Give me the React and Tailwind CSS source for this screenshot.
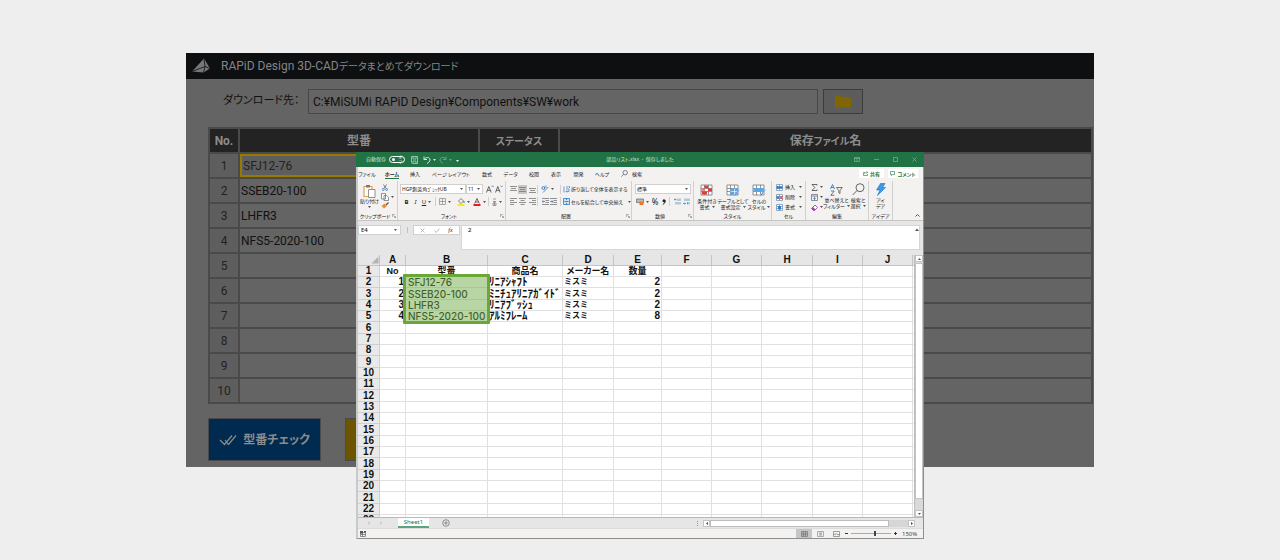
import React from "react";

const latinJp = "font-['Noto_Sans','Noto_Sans_CJK_JP',sans-serif]";

/* ---------- small drawing helpers ---------- */

function Svg({ w, h, className = "", children }) {
  return (
    <svg width={w} height={h} viewBox={`0 0 ${w} ${h}`} fill="none" className={`shrink-0 ${className}`} aria-hidden="true">
      {children}
    </svg>
  );
}

function Caret({ className = "text-[#555]" }) {
  return (
    <Svg w={3} h={2} className={className}>
      <path d="M0 0H3L1.5 2Z" fill="currentColor" />
    </Svg>
  );
}

function Lines({ rows }) {
  return (
    <Svg w={7} h={7}>
      {rows.map(([x, y, w]) => (
        <path key={y} d={`M${x} ${y}h${w}`} stroke="#777" strokeWidth="0.8" />
      ))}
    </Svg>
  );
}

function IconButton({ label, className = "", children }) {
  return (
    <button type="button" aria-label={label} className={`flex h-[9px] shrink-0 items-center justify-center gap-[2px] ${className}`}>
      {children}
    </button>
  );
}

/* ---------- download window ---------- */

const parts = ["SFJ12-76", "SSEB20-100", "LHFR3", "NFS5-2020-100", "", "", "", "", "", ""];

function DownloadWindow() {
  const th = "border-2 border-[#4a4a4a] bg-[#232323] p-0 text-[12px] font-bold text-[#8c8c8c]";
  const td = "h-[25px] border-2 border-[#4a4a4a] p-0 text-[12px] leading-[18px]";
  return (
    <section className="overflow-hidden bg-[#646464] font-['Roboto','Noto_Sans_CJK_JP',sans-serif] text-[#111]">
      <header className="flex h-[26px] items-center gap-2 bg-[#0d0f11] pl-[5px] text-[#858585]">
        <Svg w={22} h={18}>
          <path d="M1 14.500L13 1.500L19 11.500L12.500 15.500Z" fill="#777" />
          <path d="M1 14.500L14 9.500L19 11.500M13 1.500L14 9.500L12.500 15.500" stroke="#1a1a1a" strokeWidth="0.9" />
        </Svg>
        <h1 className="text-[12px] leading-[18px] whitespace-nowrap">
          RAPiD Design 3D-CAD<span className="text-[10px] [font-feature-settings:'palt']">データまとめてダウンロード</span>
        </h1>
      </header>

      <div className="flex items-center pt-[10px] pl-[37px]">
        <label htmlFor="dest" className="w-[85px] text-[11px] whitespace-nowrap [font-feature-settings:'palt']">
          ダウンロード先：
        </label>
        <input
          id="dest"
          readOnly
          value="C:¥MiSUMi RAPiD Design¥Components¥SW¥work"
          className="h-[25px] w-[510px] border border-[#484848] bg-[#656565] px-[4px] text-[12px] outline-none"
        />
        <button type="button" aria-label="フォルダー" className="ml-[5px] flex h-[25px] w-[40px] items-center justify-center border border-[#3c3c3c] bg-[#5c5c5c]">
          <Svg w={16} h={13}>
            <path d="M1.500 0.500H6L7.500 2H14.500Q16 2 16 3.500V11Q16 12.500 14.500 12.500H1.500Q0 12.500 0 11V2Q0 0.500 1.500 0.500Z" fill="#806600" />
          </Svg>
        </button>
      </div>

      <div className="mt-[13px] pr-px pl-[22px]">
        <table className="w-full table-fixed border-collapse">
          <colgroup>
            <col className="w-[30px]" />
            <col className="w-[240px]" />
            <col className="w-[80px]" />
            <col />
          </colgroup>
          <thead>
            <tr className="h-[25px]">
              <th className={th}>No.</th>
              <th className={th}>型番</th>
              <th className={th}>
                <span className="text-[10px] [font-feature-settings:'palt']">ステータス</span>
              </th>
              <th className={th}>
                保存<span className="text-[10px] [font-feature-settings:'palt']">ファイル</span>名
              </th>
            </tr>
          </thead>
          <tbody>
            {parts.map((p, i) => (
              <tr key={i}>
                <td className={`${td} bg-[#5e5e5e] text-center text-[#222]`}>{i + 1}</td>
                <td className={td}>
                  <div className={i === 0 ? "flex h-[23px] items-center border-2 border-[#997a00] bg-[#5e5e5e] pl-[1px] text-[#222]" : "pl-px"}>{p}</div>
                </td>
                <td className={td} />
                <td className={td} />
              </tr>
            ))}
          </tbody>
        </table>
      </div>

      <div className="flex gap-[24px] pt-[14px] pb-[6px] pl-[22px]">
        <button type="button" className="flex h-[43px] w-[113px] items-center justify-center gap-[6px] border border-[#4a4a4a] bg-[#002a50] text-[12px] font-bold whitespace-nowrap text-[#8c8c8c] [font-feature-settings:'palt']">
          <Svg w={18} h={12}>
            <path d="M1 6L5.500 10.500L13 1.500M6 6L9.500 10.500L17 1.500" stroke="#8c8c8c" strokeWidth="1.200" />
          </Svg>
          型番チェック
        </button>
        <button type="button" aria-label="ダウンロード" className="h-[43px] w-[113px] border border-[#4a4a4a] bg-[#6b5500]" />
      </div>
    </section>
  );
}

/* ---------- spreadsheet: title bar and tabs ---------- */

function TitleBar() {
  return (
    <header className="grid h-[15px] grid-cols-[1fr_auto_1fr] items-center bg-[#217346] text-[5px] text-[#d5e6dc]">
      <div className="flex items-center pl-[10px]">
        <span>自動保存</span>
        <button type="button" role="switch" aria-checked="false" className="ml-[3px] flex h-[7px] w-[16px] items-center gap-[2px] rounded-full border border-white pl-[2px] text-[4px] leading-[5px] text-white [font-feature-settings:'palt']">
          <span className="size-[3px] shrink-0 rounded-full bg-white" />
          オフ
        </button>
        <IconButton label="保存" className="ml-[6px]">
          <Svg w={7} h={8}>
            <path d="M0.500 0.500H6.500V7.500H1.500L0.500 6.500ZM2 0.500V3H5V0.500M2 7.500V5H5V7.500" stroke="#b5d3c2" strokeWidth="0.8" />
          </Svg>
        </IconButton>
        <IconButton label="元に戻す" className="ml-[5px]">
          <Svg w={8} h={8}>
            <path d="M1 0.500V3.500H4M1 3.500C3 0.500 7 1 7 4C7 5.500 5.500 6.500 4 7.500" stroke="#d5e6dc" />
          </Svg>
          <Caret className="text-[#d5e6dc]" />
        </IconButton>
        <IconButton label="やり直し" className="ml-[3px] opacity-40">
          <Svg w={8} h={8}>
            <path d="M7 0.500V3.500H4M7 3.500C5 0.500 1 1 1 4C1 5.500 2.500 6.500 4 7.500" stroke="#d5e6dc" />
          </Svg>
          <Caret className="text-[#d5e6dc]" />
        </IconButton>
        <IconButton label="カスタマイズ" className="ml-[4px]">
          <Svg w={3} h={4}>
            <path d="M0 0.500H3M0 2H3L1.500 4Z" stroke="none" fill="white" />
          </Svg>
        </IconButton>
      </div>
      <span className="whitespace-pre [font-feature-settings:'palt']">部品リスト.xlsx  -  保存しました</span>
      <div className="flex items-center justify-end gap-[14px] pr-[7px] text-[#7fb195]">
        <IconButton label="リボンの表示">
          <Svg w={6} h={5}>
            <path d="M0.500 0.500H5.500V4.500H0.500ZM0.500 1.500H5.500M3 2V4" stroke="currentColor" strokeWidth="0.7" />
          </Svg>
        </IconButton>
        <IconButton label="最小化">
          <Svg w={5} h={5}>
            <path d="M0 2.500H5" stroke="currentColor" strokeWidth="0.7" />
          </Svg>
        </IconButton>
        <IconButton label="最大化">
          <Svg w={5} h={5}>
            <path d="M0.500 0.500H4.500V4.500H0.500Z" stroke="currentColor" strokeWidth="0.7" />
          </Svg>
        </IconButton>
        <IconButton label="閉じる">
          <Svg w={5} h={5}>
            <path d="M0.500 0.500L4.500 4.500M4.500 0.500L0.500 4.500" stroke="currentColor" strokeWidth="0.7" />
          </Svg>
        </IconButton>
      </div>
    </header>
  );
}

const tabs = [
  ["ファイル", "w-[18px]"],
  ["ホーム", "w-[32px]"],
  ["挿入", "w-[14px]"],
  ["ページ レイアウト", "w-[58px]"],
  ["数式", "w-[14px]"],
  ["データ", "w-[33px]"],
  ["校閲", "w-[14px]"],
  ["表示", "w-[30px]"],
  ["開発", "w-[15px]"],
  ["ヘルプ", "w-[32px]"],
];

function RibbonTabs() {
  return (
    <nav className="flex h-[13px] items-center text-[5px] leading-[8px] text-[#222]">
      {tabs.map(([name, width]) => (
        <button key={name} type="button" className={`flex h-[12px] shrink-0 items-center justify-center whitespace-nowrap [font-feature-settings:'palt'] ${width}`}>
          <span className={name === "ホーム" ? "border-b border-[#217346] pt-px font-bold" : ""}>{name}</span>
        </button>
      ))}
      <button type="button" className="ml-[3px] flex items-center gap-[4px] whitespace-nowrap">
        <Svg w={7} h={7}>
          <circle cx="4.200" cy="2.700" r="2.200" stroke="#555" strokeWidth="0.7" />
          <path d="M2.600 4.300L0.300 6.700" stroke="#555" strokeWidth="0.7" />
        </Svg>
        検索
      </button>
      <div className="ml-auto flex gap-[4px] pr-[5px] font-bold text-[#217346]">
        <button type="button" className="flex h-[9px] w-[25px] items-center justify-center gap-[2px] bg-white">
          <Svg w={5} h={5}>
            <path d="M2 1.500H0.500V4.500H4.500V3M1.500 3C2 1.500 3 1.300 4.500 1.300M3.500 0.300L4.700 1.300L3.500 2.300" stroke="#217346" strokeWidth="0.6" />
          </Svg>
          共有
        </button>
        <button type="button" className="flex h-[9px] w-[30px] items-center justify-center gap-[2px] bg-white whitespace-nowrap [font-feature-settings:'palt']">
          <Svg w={5} h={5}>
            <path d="M0.500 0.500H4.500V3.500H2.500L1.500 4.700V3.500H0.500Z" stroke="#217346" strokeWidth="0.6" />
          </Svg>
          コメント
        </button>
      </div>
    </nav>
  );
}

/* ---------- spreadsheet: ribbon ---------- */

function Group({ name, width, launcher, children }) {
  return (
    <div className={`flex shrink-0 flex-col border-r border-[#d2d0ce] ${width}`}>
      <div className="h-[31px]">{children}</div>
      <div className="flex h-[8px] items-center">
        <span className="flex-1 text-center leading-[8px] whitespace-nowrap [font-feature-settings:'palt']">{name}</span>
        {launcher && (
          <button type="button" aria-label={`${name}の設定`} className="pr-px">
            <Svg w={4} h={4}>
              <path d="M0.300 3V0.300H3M1.500 1.500L3.500 3.500M3.700 2V3.700H2" stroke="#777" strokeWidth="0.6" />
            </Svg>
          </button>
        )}
      </div>
    </div>
  );
}

function Picker({ label, value, width }) {
  return (
    <span className={`flex h-[10px] shrink-0 items-center border border-[#d2d0ce] bg-white pr-[2px] ${width}`}>
      <select aria-label={label} defaultValue={value} className="h-[8px] min-w-0 flex-1 appearance-none pl-px text-[5px] leading-[8px] outline-none [font-feature-settings:'palt']">
        <option>{value}</option>
      </select>
      <Caret />
    </span>
  );
}

function BigButton({ icon, lines, caret, width }) {
  return (
    <button type="button" className={`flex shrink-0 flex-col items-center leading-[6px] whitespace-nowrap [font-feature-settings:'palt'] ${width}`}>
      <span className="flex h-[15px] items-center">{icon}</span>
      <span>{lines[0]}</span>
      <span className="flex h-[6px] items-center gap-[2px]">
        {lines[1]}
        {caret && <Caret />}
      </span>
    </button>
  );
}

function GridArt({ children }) {
  return (
    <Svg w={14} h={13}>
      <path d="M1 1H12V11H1ZM1 4.500H12M1 7.500H12M4.500 1V11M8.500 1V11" fill="#fff" stroke="#777" strokeWidth="0.8" />
      {children}
    </Svg>
  );
}

function CellIcon({ children }) {
  return (
    <Svg w={7} h={7}>
      <path d="M0.500 0.500H6.500V6.500H0.500ZM0.500 2.500H6.500M0.500 4.500H6.500M3.500 0.500V6.500" fill="#fff" stroke="#6d8aa5" strokeWidth="0.7" />
      {children}
    </Svg>
  );
}

function LetterA({ up }) {
  return (
    <Svg w={8} h={8}>
      <path d="M0.500 7.500L2.800 1.500L5.200 7.500M1.400 5.400H4.400" stroke="#444" strokeWidth="0.8" />
      <path d={up ? "M5.500 2L6.600 0.700L7.700 2" : "M5.500 0.700L6.600 2L7.700 0.700"} stroke="#2b7cd3" strokeWidth="0.7" />
    </Svg>
  );
}

function Indent({ flip }) {
  return (
    <Svg w={7} h={7}>
      <path d="M0 0.500H7M3.500 2.500H7M3.500 4.500H7M0 6.500H7" stroke="#666" strokeWidth="0.7" />
      <path d={flip ? "M0 3.500H3M1.800 2.300L3 3.500L1.800 4.700" : "M3 3.500H0M1.200 2.300L0 3.500L1.200 4.700"} stroke="#2b7cd3" strokeWidth="0.8" />
    </Svg>
  );
}

function Divider() {
  return <span className="h-[9px] w-px shrink-0 bg-[#d2d0ce]" />;
}

function Ribbon() {
  const row = "flex h-[13px] items-center";
  return (
    <div className="flex h-[41px] border-b border-[#c8c6c4] pt-px text-[5px] leading-[6px] text-[#222]">
      <Group name="クリップボード" width="w-[40px]" launcher>
        <div className="flex pt-[2px]">
          <BigButton
            width="w-[23px]"
            lines={["貼り付け", ""]}
            caret
            icon={
              <Svg w={13} h={14}>
                <path d="M1 2.500H9V12.500H1Z" fill="#fff" stroke="#e8a04d" strokeWidth="1.200" />
                <path d="M3 1H7V3.500H3Z" fill="#777" />
                <path d="M5.500 5.500H12V13.500H5.500Z" fill="#fff" stroke="#777" strokeWidth="0.8" />
              </Svg>
            }
          />
          <div className="flex flex-col">
            <IconButton label="切り取り" className="w-[8px]">
              <Svg w={6} h={7}>
                <path d="M1.500 0.500L4 4.500M4.500 0.500L2 4.500" stroke="#555" strokeWidth="0.7" />
                <circle cx="1.300" cy="5.500" r="1" stroke="#2b7cd3" strokeWidth="0.8" />
                <circle cx="4.700" cy="5.500" r="1" stroke="#2b7cd3" strokeWidth="0.8" />
              </Svg>
            </IconButton>
            <IconButton label="コピー">
              <Svg w={8} h={8}>
                <path d="M0.500 0.500H4.500V6H0.500ZM3 2.500H5.500L7.500 4.500V7.500H3Z" fill="#fff" stroke="#666" strokeWidth="0.7" />
              </Svg>
              <Caret />
            </IconButton>
            <IconButton label="書式のコピー" className="w-[8px]">
              <Svg w={8} h={7}>
                <path d="M7.500 0.500L5 3" stroke="#555" strokeWidth="1.200" />
                <path d="M3.500 1.500L6 4L3 6.500L0.500 4Z" fill="#e8912d" />
              </Svg>
            </IconButton>
          </div>
        </div>
      </Group>

      <Group name="フォント" width="w-[108px]" launcher>
        <div className={`${row} pt-[3px] pl-[2px]`}>
          <Picker label="フォント名" value="HGP創英角ｺﾞｼｯｸUB" width="w-[66px]" />
          <Picker label="サイズ" value="11" width="w-[17px]" />
          <IconButton label="拡大" className="ml-[3px]">
            <LetterA up />
          </IconButton>
          <IconButton label="縮小" className="ml-px">
            <LetterA />
          </IconButton>
        </div>
        <div className={`${row} pt-[2px] pl-[4px] text-[6px]`}>
          <button type="button" className="w-[9px] font-bold">B</button>
          <button type="button" className="w-[9px] italic">I</button>
          <button type="button" className="w-[8px] underline">U</button>
          <Caret />
          <span className="w-[4px]" />
          <Divider />
          <IconButton label="罫線" className="ml-[3px]">
            <Svg w={7} h={7}>
              <path d="M0.500 0.500H6.500V6.500H0.500ZM3.500 0.500V6.500M0.500 3.500H6.500" stroke="#888" strokeWidth="0.7" />
            </Svg>
            <Caret />
          </IconButton>
          <IconButton label="塗りつぶしの色" className="ml-[6px]">
            <Svg w={8} h={8}>
              <path d="M1.500 3L4 0.500L6.500 3L4 5.500Z" stroke="#555" strokeWidth="0.7" />
              <path d="M7 3V5" stroke="#2b7cd3" />
              <path d="M0.500 7H7.500" stroke="#ffe600" strokeWidth="1.800" />
            </Svg>
            <Caret />
          </IconButton>
          <IconButton label="フォントの色" className="ml-[3px]">
            <Svg w={8} h={8}>
              <path d="M1.700 5.500L4 0.500L6.300 5.500M2.700 4H5.300" stroke="#444" strokeWidth="0.8" />
              <path d="M0.500 7H7.500" stroke="#e00" strokeWidth="1.800" />
            </Svg>
            <Caret />
          </IconButton>
          <span className="w-[2px]" />
          <Divider />
          <IconButton label="ふりがな" className="ml-[3px]">
            <Svg w={5} h={8}>
              <path d="M1 1H4M1 3.500H4M1 5H4V7.500H1ZM2.500 3.500V7.500" stroke="#777" strokeWidth="0.7" />
            </Svg>
            <Caret />
          </IconButton>
        </div>
      </Group>

      <Group name="配置" width="w-[126px]" launcher>
        <div className={`${row} pt-[3px] pl-[3px]`}>
          <IconButton label="上揃え" className="w-[9px]">
            <Lines rows={[[0, 0.5, 7], [1, 2.5, 5], [0, 4.5, 7]]} />
          </IconButton>
          <IconButton label="上下中央揃え" className="w-[9px] bg-[#c8c6c4]">
            <Lines rows={[[0, 1.5, 7], [1, 3.5, 5], [0, 5.5, 7]]} />
          </IconButton>
          <IconButton label="下揃え" className="w-[10px]">
            <Lines rows={[[0, 2.5, 7], [1, 4.5, 5], [0, 6.5, 7]]} />
          </IconButton>
          <Divider />
          <IconButton label="方向" className="ml-[3px]">
            <Svg w={8} h={8}>
              <path d="M2 7.500L7.500 2" stroke="#666" strokeWidth="0.8" />
              <circle cx="2.200" cy="3" r="1.400" stroke="#2b7cd3" strokeWidth="0.8" />
              <path d="M3.600 1.500V4.500M5 0.500V3" stroke="#2b7cd3" strokeWidth="0.8" />
            </Svg>
            <Caret />
          </IconButton>
          <span className="w-[6px]" />
          <Divider />
          <button type="button" className="ml-[2px] flex items-center gap-px whitespace-nowrap [font-feature-settings:'palt']">
            <Svg w={7} h={7}>
              <path d="M1 0.500V6.500M3 1L5 1M3 3H6V5.500H3M4 4.500L3 5.500L4 6.500" stroke="#2b7cd3" strokeWidth="0.7" />
              <path d="M5.500 0.500H6.500V2" stroke="#666" strokeWidth="0.7" />
            </Svg>
            折り返して全体を表示する
          </button>
        </div>
        <div className={`${row} pt-[2px] pl-[3px]`}>
          <IconButton label="左揃え" className="w-[9px]">
            <Lines rows={[[0, 0.5, 7], [0, 2.5, 4], [0, 4.5, 7], [0, 6.5, 4]]} />
          </IconButton>
          <IconButton label="中央揃え" className="w-[9px]">
            <Lines rows={[[0, 0.5, 7], [1.5, 2.5, 4], [0, 4.5, 7], [1.5, 6.5, 4]]} />
          </IconButton>
          <IconButton label="右揃え" className="w-[10px]">
            <Lines rows={[[0, 0.5, 7], [3, 2.5, 4], [0, 4.5, 7], [3, 6.5, 4]]} />
          </IconButton>
          <Divider />
          <IconButton label="インデント解除" className="ml-[3px] w-[8px]">
            <Indent />
          </IconButton>
          <IconButton label="インデント" className="w-[9px]">
            <Indent flip />
          </IconButton>
          <span className="w-[2px]" />
          <Divider />
          <button type="button" className="ml-[2px] flex items-center gap-px whitespace-nowrap [font-feature-settings:'palt']">
            <Svg w={7} h={7}>
              <path d="M0.500 0.500H6.500V6.500H0.500Z" fill="#cfe4f7" stroke="#2b7cd3" strokeWidth="0.8" />
              <path d="M1.500 3.500H5.500M3.500 0.500V2M3.500 5V6.500" stroke="#2b6cb0" strokeWidth="0.8" />
            </Svg>
            セルを結合して中央揃え
            <span className="pl-[4px]">
              <Caret />
            </span>
          </button>
        </div>
      </Group>

      <Group name="数値" width="w-[62px]" launcher>
        <div className={`${row} pt-[3px] pl-[3px]`}>
          <Picker label="表示形式" value="標準" width="w-[56px]" />
        </div>
        <div className={`${row} pt-[2px] pl-[4px] text-[8px]`}>
          <IconButton label="通貨">
            <Svg w={8} h={7}>
              <path d="M0.500 1H7.500V4.500H0.500Z" fill="#bbb" stroke="#666" strokeWidth="0.7" />
              <path d="M3.500 3.500H7.500V7H3.500Z" fill="#e8762d" />
            </Svg>
            <Caret />
          </IconButton>
          <button type="button" className="ml-[2px] w-[8px]">%</button>
          <IconButton label="桁区切り" className="w-[10px]">
            <Svg w={4} h={6}>
              <circle cx="2" cy="1.700" r="1.500" fill="#222" />
              <path d="M3.200 1.700C3.200 3.500 2.200 4.800 0.800 5.500" stroke="#222" />
            </Svg>
          </IconButton>
          <Divider />
          <IconButton label="小数点以下を増やす" className="ml-[3px] w-[9px]">
            <Svg w={7} h={7}>
              <path d="M2.500 1.500H0M1 0.500L0 1.500L1 2.500" stroke="#2b7cd3" strokeWidth="0.7" />
              <path d="M4 0.500V3M6 0.500V3M2 4V6.500M4 4V6.500M6 4V6.500" stroke="#5b8ab5" strokeWidth="0.8" />
            </Svg>
          </IconButton>
          <IconButton label="小数点以下を減らす" className="w-[8px]">
            <Svg w={7} h={7}>
              <path d="M0 5.500H2.500M1.500 4.500L2.500 5.500L1.500 6.500" stroke="#2b7cd3" strokeWidth="0.7" />
              <path d="M2 0.500V3M4 0.500V3M6 0.500V3M4.500 4V6.500M6 4V6.500" stroke="#5b8ab5" strokeWidth="0.8" />
            </Svg>
          </IconButton>
        </div>
      </Group>

      <Group name="スタイル" width="w-[78px]">
        <div className="flex pt-[2px] pl-[2px]">
          <BigButton
            width="w-[22px]"
            lines={["条件付き", "書式"]}
            caret
            icon={
              <GridArt>
                <path d="M4.500 1.500H8V4H4.500ZM8 4.500H12V7H8ZM2 7.500H7V10.500H2Z" fill="#e03c3c" />
                <path d="M1.500 4.500H5V7H1.500Z" fill="#f08080" />
              </GridArt>
            }
          />
          <BigButton
            width="w-[30px]"
            lines={["テーブルとして", "書式設定"]}
            caret
            icon={
              <GridArt>
                <path d="M4.500 4.500H12V11H4.500Z" fill="#5ba7e6" />
                <path d="M4.500 7.500H12M8.500 4.500V11" stroke="#fff" strokeWidth="0.6" />
                <path d="M13 5L9 10L7 12.500L9.500 11.500L13.500 6Z" fill="#2b7cd3" stroke="#fff" strokeWidth="0.4" />
              </GridArt>
            }
          />
          <BigButton
            width="w-[22px]"
            lines={["セルの", "スタイル"]}
            caret
            icon={
              <GridArt>
                <path d="M1.500 4H12V8H1.500Z" fill="#5ba7e6" />
                <path d="M13 5L9 10L6.500 12.500L9.500 11.500L13.500 6Z" fill="#2b7cd3" stroke="#fff" strokeWidth="0.4" />
              </GridArt>
            }
          />
        </div>
      </Group>

      <Group name="セル" width="w-[34px]">
        <div className="flex flex-col pt-px pl-[4px]">
          <button type="button" className="flex h-[10px] items-center gap-[2px] whitespace-nowrap">
            <CellIcon>
              <path d="M2 2.500H6.500V4.500H2ZM2 1.500L0.300 3.500L2 5.500Z" fill="#2b7cd3" />
            </CellIcon>
            挿入
            <span className="pl-[2px]">
              <Caret />
            </span>
          </button>
          <button type="button" className="flex h-[10px] items-center gap-[2px] whitespace-nowrap">
            <CellIcon>
              <path d="M0.500 2.500H3V4.500H0.500Z" fill="#2b7cd3" />
              <path d="M3.500 2L6.700 5M6.700 2L3.500 5" stroke="#e03c3c" />
            </CellIcon>
            削除
            <span className="pl-[2px]">
              <Caret />
            </span>
          </button>
          <button type="button" className="flex h-[10px] items-center gap-[2px] whitespace-nowrap">
            <CellIcon>
              <path d="M2 2H5V5.500H2Z" fill="#2b7cd3" />
            </CellIcon>
            書式
            <span className="pl-[2px]">
              <Caret />
            </span>
          </button>
        </div>
      </Group>

      <Group name="編集" width="w-[63px]">
        <div className="flex pt-px pl-[4px]">
          <div className="flex w-[14px] flex-col">
            <IconButton label="合計" className="h-[10px]">
              <Svg w={7} h={7}>
                <path d="M6 1.500V0.500H1L3.800 3.500L1 6.500H6V5.500" stroke="#444" strokeWidth="0.8" />
              </Svg>
              <Caret />
            </IconButton>
            <IconButton label="フィル" className="h-[10px]">
              <Svg w={7} h={7}>
                <path d="M0.500 0.500H6.500V6.500H0.500ZM0.500 2H6.500" stroke="#666" strokeWidth="0.7" />
                <path d="M3.500 2.500V5.500M2.200 4.300L3.500 5.500L4.800 4.300" stroke="#2b7cd3" strokeWidth="0.8" />
              </Svg>
              <Caret />
            </IconButton>
            <IconButton label="クリア" className="h-[10px]">
              <Svg w={7} h={7}>
                <path d="M0.500 4.500L4 1L6.500 3.500L3.500 6.500H2.500Z" fill="#fff" stroke="#a33fb5" strokeWidth="0.9" />
                <path d="M2 3L4.500 5.500L3.500 6.500H2.500L0.500 4.500Z" fill="#a33fb5" />
              </Svg>
              <Caret />
            </IconButton>
          </div>
          <BigButton
            width="w-[25px]"
            lines={["並べ替えと", "フィルター"]}
            caret
            icon={
              <Svg w={13} h={12}>
                <path d="M0.500 5L2.500 0.500L4.500 5M1.200 3.500H3.800" stroke="#2b7cd3" strokeWidth="0.9" />
                <path d="M0.800 7H4.200L0.800 11.300H4.300" stroke="#666" strokeWidth="0.9" />
                <path d="M6.500 3.500H12.300L10 6.500V9.500L8.800 8.800V6.500Z" stroke="#555" strokeWidth="0.8" />
              </Svg>
            }
          />
          <BigButton
            width="w-[18px]"
            lines={["検索と", "選択"]}
            caret
            icon={
              <Svg w={13} h={13}>
                <circle cx="8" cy="4.700" r="4" stroke="#555" strokeWidth="0.9" />
                <path d="M5 7.500L0.700 12" stroke="#555" strokeWidth="0.9" />
              </Svg>
            }
          />
        </div>
      </Group>

      <Group name="アイデア" width="w-[24px]">
        <div className="pt-px">
          <BigButton
            width="w-full"
            lines={["アイ", "デア"]}
            icon={
              <Svg w={10} h={13}>
                <path d="M4.500 0.500H9L6.500 4.500H9.500L1.500 12.500L4 7H0.500Z" fill="#3b9be8" stroke="#1f6fb8" strokeWidth="0.6" />
              </Svg>
            }
          />
        </div>
      </Group>

      <button type="button" aria-label="リボンを折りたたむ" className="mt-auto ml-auto p-[3px]">
        <Svg w={5} h={3}>
          <path d="M0.500 2.500L2.500 0.500L4.500 2.500" stroke="#444" strokeWidth="0.9" />
        </Svg>
      </button>
    </div>
  );
}

function FormulaBar() {
  return (
    <div className="flex h-[34px] items-start bg-[#e6e6e6] pt-[4px] pr-px text-[6px] text-[#222]">
      <span className="flex h-[10px] w-[43px] shrink-0 items-center border border-[#d0d0d0] bg-white pr-[3px]">
        <input aria-label="名前ボックス" readOnly value="E4" className="min-w-0 flex-1 pl-[2px] font-medium outline-none" />
        <Caret />
      </span>
      <span className="mt-[2px] ml-[6px] h-[6px] w-px shrink-0 bg-[#c0c0c0]" />
      <span className="ml-[5px] flex h-[10px] w-[47px] shrink-0 items-center justify-around border border-[#d0d0d0] bg-white px-[2px]">
        <IconButton label="キャンセル">
          <Svg w={5} h={5}>
            <path d="M0.500 0.500L4.500 4.500M4.500 0.500L0.500 4.500" stroke="#aaa" strokeWidth="0.8" />
          </Svg>
        </IconButton>
        <IconButton label="入力">
          <Svg w={6} h={5}>
            <path d="M0.500 2.500L2.200 4.500L5.500 0.500" stroke="#aaa" strokeWidth="0.8" />
          </Svg>
        </IconButton>
        <button type="button" className="font-['Liberation_Serif',serif] leading-[8px] italic">fx</button>
      </span>
      <textarea aria-label="数式バー" readOnly value="2" className="ml-px h-[25px] min-w-0 flex-1 resize-none border border-[#d6d6d6] bg-white px-[6px] leading-[8px] font-medium outline-none" />
      <button type="button" aria-label="数式バーの折りたたみ" className="-ml-[8px] p-[3px]">
        <Svg w={4} h={3}>
          <path d="M0 3L2 0.500L4 3Z" fill="#555" />
        </Svg>
      </button>
    </div>
  );
}

/* ---------- spreadsheet: cells ---------- */

const columns = ["A", "B", "C", "D", "E", "F", "G", "H", "I", "J"];
const columnWidths = ["w-[26px]", "w-[82px]", "w-[75px]", "w-[51px]", "w-[48px]", "w-[50px]", "w-[50px]", "w-[51px]", "w-[50px]", "w-[50px]"];
const cellRows = [
  ["No", "型番", "商品名", "メーカー名", "数量"],
  ["1", "SFJ12-76", "ﾘﾆｱｼｬﾌﾄ", "ミスミ", "2"],
  ["2", "SSEB20-100", "ﾐﾆﾁｭｱﾘﾆｱｶﾞｲﾄﾞ", "ミスミ", "2"],
  ["3", "LHFR3", "ﾘﾆｱﾌﾞｯｼｭ", "ミスミ", "2"],
  ["4", "NFS5-2020-100", "ｱﾙﾐﾌﾚｰﾑ", "ミスミ", "8"],
];
const rowNumbers = Array.from({ length: 23 }, (_, i) => i + 1);
const bodyAlign = [
  "text-right",
  "text-left pl-[2px] font-['Inter',sans-serif] font-medium",
  "text-left text-[11px]",
  "text-left text-[8px]",
  "text-right",
];

function Sheet() {
  return (
    <div className="flex h-[262px] overflow-hidden bg-white">
      <div className="relative min-w-0 flex-1">
        <table className="w-full table-fixed border-separate border-spacing-0 font-['Liberation_Sans','Noto_Sans_CJK_JP',sans-serif] text-[10px] leading-[10px] font-bold text-[#111]">
          <colgroup>
            <col className="w-[22px]" />
            {columnWidths.map((w, i) => (
              <col key={i} className={w} />
            ))}
            <col />
          </colgroup>
          <thead>
            <tr className="h-[10px] bg-[#e6e6e6]">
              <th className="border-r border-b border-[#c4c4c4] p-0">
                <Svg w={8} h={8} className="ml-auto">
                  <path d="M7.500 0.500V7.500H0.500Z" fill="#b4b4b4" />
                </Svg>
              </th>
              {columns.map((c) => (
                <th key={c} className="border-r border-b border-[#c4c4c4] p-0">{c}</th>
              ))}
              <th className="border-b border-[#c4c4c4] p-0" />
            </tr>
          </thead>
          <tbody>
            {rowNumbers.map((n) => {
              const cells = cellRows[n - 1] || [];
              return (
                <tr key={n} className={n % 3 === 0 ? "h-[12px]" : "h-[11px]"}>
                  <th className="border-r border-b border-[#cfcfcf] bg-[#e9e9e9] p-0">{n}</th>
                  {columns.map((c, i) => (
                    <td key={c} className={`border-r border-b border-[#e0e0e0] p-0 px-px whitespace-nowrap ${n === 1 ? "text-center text-[9px] [font-feature-settings:'palt']" : bodyAlign[i] || ""}`}>
                      {cells[i]}
                    </td>
                  ))}
                  <td className="border-b border-[#e0e0e0] p-0" />
                </tr>
              );
            })}
          </tbody>
        </table>
        <div className="absolute top-[19px] left-[45px] h-[50px] w-[87px] rounded-[1px] border-[3px] border-[#6aa738] bg-[#70ad47]/50" />
      </div>
      <div className="flex w-[9px] shrink-0 flex-col border-l border-[#bdbdbd] bg-[#d9d9d9]">
        <button type="button" aria-label="上へ" className="flex h-[7px] items-center justify-center border border-[#c4c4c4] bg-white">
          <Svg w={3} h={2}>
            <path d="M0 2L1.500 0L3 2Z" fill="#555" />
          </Svg>
        </button>
        <div className="mt-px h-[236px] border border-[#c4c4c4] bg-white" />
        <button type="button" aria-label="下へ" className="mt-auto flex h-[7px] items-center justify-center border border-[#c4c4c4] bg-white">
          <Caret />
        </button>
      </div>
    </div>
  );
}

function SheetTabs() {
  return (
    <div className="flex h-[11px] items-center border-t border-[#b8b8b8] bg-[#e6e6e6] text-[6px]">
      <div className="flex w-[40px] gap-[10px] pl-[10px] text-[#a0a0a0]">
        <IconButton label="前のシート">
          <Svg w={2} h={4}>
            <path d="M2 0.500L0.500 2L2 3.500" stroke="currentColor" strokeWidth="0.7" />
          </Svg>
        </IconButton>
        <IconButton label="次のシート">
          <Svg w={2} h={4}>
            <path d="M0 0.500L1.500 2L0 3.500" stroke="currentColor" strokeWidth="0.7" />
          </Svg>
        </IconButton>
      </div>
      <button type="button" className="h-[10px] w-[31px] shrink-0 border-b-2 border-[#5fa37d] bg-white leading-[8px] text-[#217346]">Sheet1</button>
      <IconButton label="新しいシート" className="ml-[13px]">
        <Svg w={8} h={8}>
          <circle cx="4" cy="4" r="3.300" stroke="#777" strokeWidth="0.8" />
          <path d="M2.200 4H5.800M4 2.200V5.800" stroke="#777" strokeWidth="0.8" />
        </Svg>
      </IconButton>
      <span className="ml-auto h-[5px] border-l border-dotted border-[#999]" />
      <div className="ml-[5px] flex h-[7px] w-[212px] items-stretch bg-[#d6d6d6]">
        <button type="button" aria-label="左へ" className="flex w-[7px] items-center justify-center border border-[#c4c4c4] bg-white">
          <Svg w={2} h={3}>
            <path d="M2 0V3L0 1.500Z" fill="#444" />
          </Svg>
        </button>
        <div className="w-[179px] border border-[#bdbdbd] bg-white" />
        <button type="button" aria-label="右へ" className="ml-auto flex w-[7px] items-center justify-center border border-[#c4c4c4] bg-white">
          <Svg w={2} h={3}>
            <path d="M0 0V3L2 1.500Z" fill="#444" />
          </Svg>
        </button>
      </div>
      <span className="w-[8px]" />
    </div>
  );
}

function StatusBar() {
  return (
    <footer className="flex h-[10px] items-center border-t border-[#dcdcdc] bg-[#f3f2f1] pl-[2px] text-[6px] leading-[8px] text-[#444]">
      <IconButton label="マクロの記録">
        <Svg w={6} h={6}>
          <path d="M0.500 1.500H5.500V5.500H0.500ZM0.500 3.500H5.500M2.500 1.500V5.500" stroke="#666" strokeWidth="0.7" />
          <path d="M0 0H3V2.500H0ZM4 0H6V1.500H4Z" fill="#555" />
        </Svg>
      </IconButton>
      <div className="ml-auto flex items-center">
        <IconButton label="標準" className="w-[16px] bg-[#c6c6c6]">
          <Svg w={7} h={6}>
            <path d="M0.500 0.500H6.500V5.500H0.500ZM0.500 2.200H6.500M0.500 3.800H6.500M2.500 0.500V5.500M4.500 0.500V5.500" stroke="#777" strokeWidth="0.7" />
          </Svg>
        </IconButton>
        <IconButton label="ページ レイアウト" className="w-[16px]">
          <Svg w={7} h={6}>
            <path d="M0.500 0.500H6.500V5.500H0.500Z" stroke="#999" strokeWidth="0.8" />
            <path d="M2 2H5M2 3H5M2 4H5" stroke="#888" strokeWidth="0.7" />
          </Svg>
        </IconButton>
        <IconButton label="改ページ プレビュー" className="w-[16px]">
          <Svg w={7} h={6}>
            <path d="M0.500 0.500H6.500V5.500H0.500ZM0.500 3.500H2.500M4 3.500H6.500M3 2V3.500" stroke="#888" strokeWidth="0.8" />
          </Svg>
        </IconButton>
        <IconButton label="縮小" className="w-[5px]">
          <Svg w={3} h={3}>
            <path d="M0 1.500H3" stroke="#333" />
          </Svg>
        </IconButton>
        <input
          type="range"
          aria-label="ズーム"
          min="0"
          max="100"
          defaultValue="60"
          className="mx-[2px] h-px w-[40px] appearance-none bg-[#aaa] [&::-webkit-slider-thumb]:h-[5px] [&::-webkit-slider-thumb]:w-[2px] [&::-webkit-slider-thumb]:appearance-none [&::-webkit-slider-thumb]:bg-[#444]"
        />
        <IconButton label="拡大" className="w-[5px]">
          <Svg w={3} h={3}>
            <path d="M0 1.500H3M1.500 0V3" stroke="#333" />
          </Svg>
        </IconButton>
        <span className="w-[25px] pl-[4px]">150%</span>
      </div>
    </footer>
  );
}

function Spreadsheet() {
  return (
    <section className="w-[568px] bg-[#f3f2f1]">
      <TitleBar />
      <div className="border-r border-b border-l-2 border-r-[#8f8f8f] border-b-[#8f8f8f] border-l-[#c9c9c9]">
        <RibbonTabs />
        <Ribbon />
        <FormulaBar />
        <Sheet />
        <SheetTabs />
        <StatusBar />
      </div>
    </section>
  );
}

export default function App() {
  return (
    <main className={`min-h-screen bg-[#eeeeee] py-[53px] ${latinJp}`}>
      <div className="relative mx-auto w-full max-w-[908px]">
        <DownloadWindow />
        <div className="absolute top-[99px] left-[170px]">
          <Spreadsheet />
        </div>
      </div>
    </main>
  );
}
